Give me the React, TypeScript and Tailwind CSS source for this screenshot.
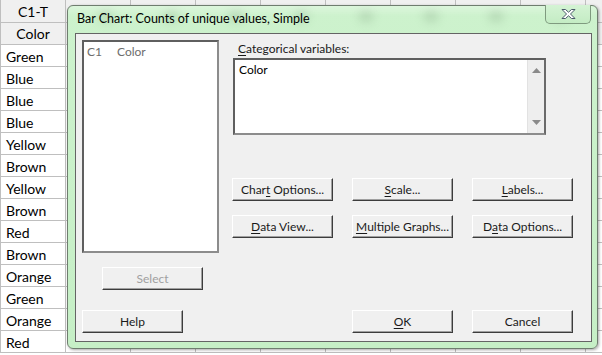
import * as React from 'react';

const colorRows = [
  'Green', 'Blue', 'Blue', 'Blue', 'Yellow', 'Brown', 'Yellow',
  'Brown', 'Red', 'Brown', 'Orange', 'Green', 'Orange', 'Red',
];

const Btn: React.FC<{ children: React.ReactNode; disabled?: boolean; className?: string }> = ({
  children,
  disabled,
  className = '',
}) => (
  <div
    className={`flex h-[23px] w-[101px] items-center justify-center whitespace-nowrap border border-t-white border-l-white border-r-[#3c3c3c] border-b-[#3c3c3c] bg-[#f0f0f0] text-[12px] shadow-[inset_-1px_-1px_0_#a0a0a0] ${
      disabled ? 'text-[#a0a0a0]' : 'text-[#1a1a1a]'
    } ${className}`}
  >
    {children}
  </div>
);

function Sheet() {
  return (
    <div className="flex font-['Lato',sans-serif] text-[14px] text-black">
      {Array.from({ length: 10 }).map((_, c) => (
        <div key={c} className={`flex w-[65px] shrink-0 flex-col border-r border-[#bfbfbf] ${c === 0 ? 'w-[66px] border-l' : ''}`}>
          <div className="flex h-[23px] items-center justify-center border-b border-[#bfbfbf] bg-[#f0f0f0]">
            {c === 0 ? 'C1-T' : ''}
          </div>
          <div className="flex h-[22px] items-center justify-center border-b border-[#bfbfbf] bg-[#f0f0f0]">
            {c === 0 ? 'Color' : ''}
          </div>
          {colorRows.map((v, r) => (
            <div key={r} className="flex h-[22px] items-center border-b border-[#bfbfbf] bg-white pl-[5px] pt-[1px]">
              {c === 0 ? v : ''}
            </div>
          ))}
        </div>
      ))}
    </div>
  );
}

function Dialog() {
  return (
    <div className="absolute left-[67px] top-[5px] flex h-[344px] w-[531px] flex-col rounded-[6px] border border-[#6f7d6f] bg-gradient-to-b from-[#cdf2cd] to-[#c6efc6] pb-[6px] pl-[7px] pr-[5px] shadow-[1px_1px_3px_rgba(0,0,0,0.35)] font-['Lato',sans-serif]">
      {/* glass blur of the column headers behind */}
      <div className="pointer-events-none absolute inset-x-0 top-0 h-[26px] overflow-hidden rounded-t-[6px]">
        {[30, 95, 160, 225, 290, 355, 420, 485].map((x) => (
          <div key={x} className="absolute top-[3px] h-[14px] w-[16px] rounded-full bg-[#9cbf9c] opacity-40 blur-[4px]" style={{ left: x }} />
        ))}
        <div className="absolute inset-x-0 top-0 h-[10px] bg-gradient-to-b from-white/30 to-transparent" />
      </div>

      {/* title bar */}
      <div className="relative flex h-[27px] shrink-0 items-center">
        <span className="pl-[2px] text-[12.5px] text-black">Bar Chart: Counts of unique values, Simple</span>
        <div className="absolute right-[1px] top-[-1px] flex h-[19px] w-[46px] items-center justify-center rounded-b-[5px] border border-t-0 border-[#7f9a7f] bg-gradient-to-b from-[#d4f3d4] to-[#c4ecc4]">
          <svg width="17" height="12" viewBox="0 0 17 12">
            <path
              d="M2 1.5 L5.5 1.5 L8.5 4.2 L11.5 1.5 L15 1.5 L10.5 6 L15 10.5 L11.5 10.5 L8.5 7.8 L5.5 10.5 L2 10.5 L6.5 6 Z"
              fill="#ffffff"
              stroke="#4a5a6a"
              strokeWidth="1"
              strokeLinejoin="round"
            />
          </svg>
        </div>
      </div>

      {/* client area */}
      <div className="flex flex-1 flex-col border border-[#646464] bg-[#f0f0f0] pl-[6px] pt-[6px] text-[12px] text-[#1a1a1a]">
        <div className="flex">
          <div className="flex w-[137px] flex-col">
            <div className="h-[213px] border-2 border-t-[#5f5f5f] border-l-[#5f5f5f] border-r-[#8c8c8c] border-b-[#8c8c8c] bg-white px-[3px] pt-[1px] text-[#6d6d6d]">
              <div className="flex">
                <span className="w-[30px]">C1</span>
                <span>Color</span>
              </div>
            </div>
            <Btn disabled className="ml-[20px] mt-[14px] h-[22px]">Select</Btn>
          </div>

          <div className="ml-[13px] flex flex-col">
            <div className="flex h-[18px] items-center pl-[6px]">
              <span>
                <span className="underline underline-offset-2">C</span>ategorical variables:
              </span>
            </div>
            <div className="ml-[1px] flex h-[77px] w-[313px] border-2 border-t-[#5f5f5f] border-l-[#5f5f5f] border-r-[#6a6a6a] border-b-[#8c8c8c] bg-white">
              <div className="flex-1 pl-[4px] pt-[1px] text-black">Color</div>
              <div className="flex w-[17px] flex-col items-center justify-between border-l border-[#e2e2e2] bg-[#eeeeee] py-[8px]">
                <svg width="9" height="5" viewBox="0 0 9 5">
                  <path d="M0 5 L4.5 0 L9 5 Z" fill="#8a8a8a" />
                </svg>
                <svg width="9" height="5" viewBox="0 0 9 5">
                  <path d="M0 0 L9 0 L4.5 5 Z" fill="#8a8a8a" />
                </svg>
              </div>
            </div>

            <div className="mt-[43px] grid grid-cols-[101px_101px_101px] gap-x-[19px] gap-y-[14px]">
              <Btn>
                Char<span className="underline underline-offset-2">t</span>&nbsp;Options...
              </Btn>
              <Btn>
                <span className="underline underline-offset-2">S</span>cale...
              </Btn>
              <Btn>
                <span className="underline underline-offset-2">L</span>abels...
              </Btn>
              <Btn>
                <span className="underline underline-offset-2">D</span>ata View...
              </Btn>
              <Btn>
                <span className="underline underline-offset-2">M</span>ultiple Graphs...
              </Btn>
              <Btn>
                D<span className="underline underline-offset-2">a</span>ta Options...
              </Btn>
            </div>
          </div>
        </div>

        <div className="mt-[20px] flex pr-[18px]">
          <Btn>Help</Btn>
          <div className="ml-auto flex gap-x-[19px]">
            <Btn>
              <span className="underline underline-offset-2">O</span>K
            </Btn>
            <Btn>Cancel</Btn>
          </div>
        </div>
      </div>
    </div>
  );
}

export default function App() {
  return (
    <div className="relative h-[355px] w-[602px] overflow-hidden bg-white">
      <Sheet />
      <Dialog />
    </div>
  );
}
